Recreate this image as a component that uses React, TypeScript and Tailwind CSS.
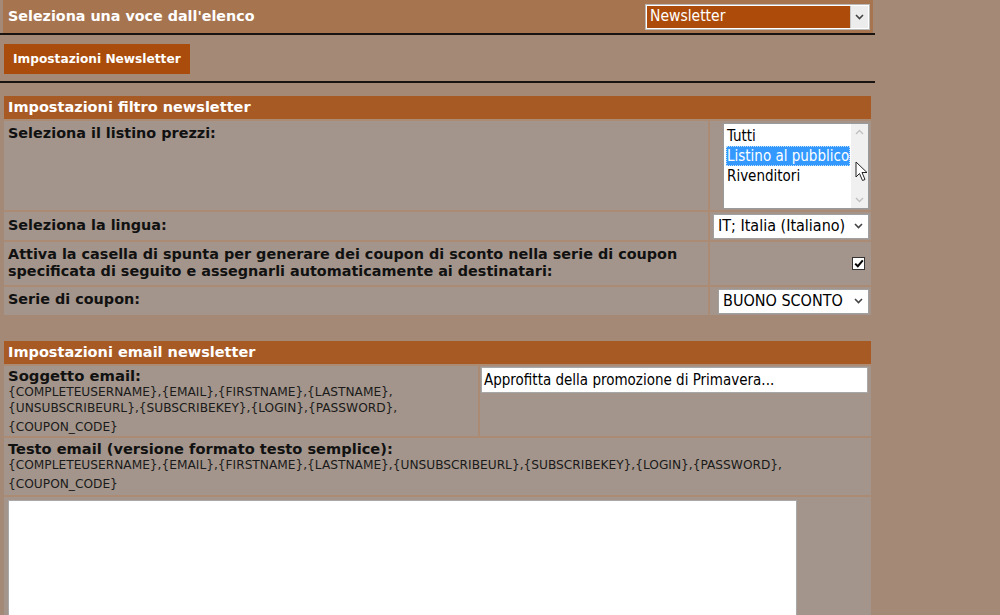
import React from "react";

const Chevron = ({ className = "" }: { className?: string }) => (
  <svg width="9" height="6" viewBox="0 0 9 6" className={className}>
    <path d="M1 1 L4.5 4.5 L8 1" fill="none" stroke="#444" strokeWidth="1.6" />
  </svg>
);

const FakeSelect = ({ text, width }: { text: string; width: string }) => (
  <div
    className={`${width} h-[25px] bg-white border border-[#a0a0a0] flex items-center justify-between pl-[4px] pr-[5px]`}
  >
    <span className="text-[16px] text-black leading-none whitespace-nowrap" style={{ fontFamily: "Tahoma, 'DejaVu Sans Condensed', 'DejaVu Sans', sans-serif" }}>
      {text}
    </span>
    <Chevron />
  </div>
);

export default function App() {
  const bold = { fontFamily: "Verdana, 'DejaVu Sans', sans-serif" };
  const ui = { fontFamily: "Tahoma, 'DejaVu Sans Condensed', 'DejaVu Sans', sans-serif" };
  return (
    <div className="w-[1000px] h-[615px] overflow-hidden bg-[#a48976]" style={bold}>
      <div className="w-[875px]">
        {/* top bar */}
        <div className="ml-[3px] mr-[2px] h-[33px] bg-[#a6744f] flex items-center justify-between pl-[5px] pr-[3px]">
          <span className="text-white font-bold text-[14.3px]">Seleziona una voce dall'elenco</span>
          <div className="w-[225px] h-[26px] border border-[#b9b9b9] bg-white p-[1px] flex">
            <div className="flex-1 bg-[#ad4c0a] flex items-center pl-[3px]">
              <span className="text-white text-[15.5px] leading-none" style={ui}>Newsletter</span>
            </div>
            <div className="w-[18px] bg-[#ececec] border-l border-[#c8c8c8] flex items-center justify-center">
              <Chevron />
            </div>
          </div>
        </div>
        <div className="h-[2px] bg-[#1a1410]" />
        {/* button area */}
        <div className="h-[46px] pl-[4px] pt-[9px]">
          <div className="w-[186px] h-[30px] bg-[#aa4d0c] flex items-center pl-[9px]">
            <span className="text-white font-bold text-[12.2px]">Impostazioni Newsletter</span>
          </div>
        </div>
        <div className="h-[2px] bg-[#1a1410]" />

        {/* section 1 */}
        <div className="mt-[13px] ml-[4px] mr-[4px] bg-[#ab8b74] flex flex-col gap-[2px]">
          <div className="h-[23px] bg-[#a85a25] flex items-center pl-[4px]">
            <span className="text-white font-bold text-[14.5px]">Impostazioni filtro newsletter</span>
          </div>
          <div className="grid grid-cols-[704px_1fr] gap-[2px]">
            <div className="bg-[#a3958b] h-[89px] pl-[4px] pt-[4px] text-[14.4px] font-bold text-[#111] leading-[16px]">
              Seleziona il listino prezzi:
            </div>
            <div className="bg-[#a3958b] h-[89px] flex justify-end pr-[2px] pt-[2px]">
              <div className="relative w-[146px] h-[86px] bg-white border border-[#9a9a9a] flex">
                <div className="flex-1 pt-[2px] pl-[2px] text-[15px] leading-[20px] text-black" style={ui}>
                  <div className="pl-[1px]">Tutti</div>
                  <div className="bg-[#3399ff] text-white pl-[1px] outline-1 outline-dotted outline-[#bfdfff] -outline-offset-1 w-[124px]">Listino al pubblico</div>
                  <div className="pl-[1px]">Rivenditori</div>
                </div>
                <div className="w-[17px] bg-[#f0f0f0] flex flex-col items-center justify-between py-[5px]">
                  <svg width="9" height="6" viewBox="0 0 9 6"><path d="M1 5 L4.5 1.5 L8 5" fill="none" stroke="#c0c0c0" strokeWidth="1.4" /></svg>
                  <svg width="9" height="6" viewBox="0 0 9 6"><path d="M1 1 L4.5 4.5 L8 1" fill="none" stroke="#c0c0c0" strokeWidth="1.4" /></svg>
                </div>
                {/* cursor */}
                <svg className="absolute left-[131px] top-[37px]" width="14" height="21" viewBox="0 0 14 21">
                  <path d="M1 1 L1 16 L4.5 12.5 L7.5 19.5 L10 18.5 L7 11.5 L12 11.5 Z" fill="white" stroke="#222" strokeWidth="1" strokeLinejoin="round" />
                </svg>
              </div>
            </div>
          </div>
          <div className="grid grid-cols-[704px_1fr] gap-[2px]">
            <div className="bg-[#a3958b] h-[28px] pl-[4px] pt-[5px] text-[14.4px] font-bold text-[#111] leading-[16px]">
              Seleziona la lingua:
            </div>
            <div className="bg-[#a3958b] h-[28px] flex justify-end items-center pr-[2px]">
              <FakeSelect text="IT; Italia (Italiano)" width="w-[156px]" />
            </div>
          </div>
          <div className="grid grid-cols-[704px_1fr] gap-[2px]">
            <div className="bg-[#a3958b] h-[43px] pl-[4px] pt-[4px] text-[14.4px] font-bold text-[#111] leading-[17px]">
              Attiva la casella di spunta per generare dei coupon di sconto nella serie di coupon specificata di seguito e assegnarli automaticamente ai destinatari:
            </div>
            <div className="bg-[#a3958b] h-[43px] flex justify-end pr-[6px] pt-[15px]">
              <div className="w-[13px] h-[13px] bg-white border border-[#333] flex items-center justify-center">
                <svg width="10" height="9" viewBox="0 0 10 9"><path d="M1.2 4.6 L3.8 7.2 L8.8 1.4" fill="none" stroke="#000" strokeWidth="2" /></svg>
              </div>
            </div>
          </div>
          <div className="grid grid-cols-[704px_1fr] gap-[2px]">
            <div className="bg-[#a3958b] h-[28px] pl-[4px] pt-[4px] text-[14.4px] font-bold text-[#111] leading-[16px]">
              Serie di coupon:
            </div>
            <div className="bg-[#a3958b] h-[28px] flex justify-end items-center pr-[2px]">
              <FakeSelect text="BUONO SCONTO" width="w-[151px]" />
            </div>
          </div>
        </div>

        {/* section 2 */}
        <div className="mt-[26px] ml-[4px] mr-[4px] bg-[#ab8b74] flex flex-col gap-[2px]">
          <div className="h-[23px] bg-[#a85a25] flex items-center pl-[4px]">
            <span className="text-white font-bold text-[14.5px]">Impostazioni email newsletter</span>
          </div>
          <div className="grid grid-cols-[474px_1fr] gap-[2px]">
            <div className="bg-[#a3958b] h-[70px] pl-[4px] pt-[2px] text-[#111]">
              <div className="text-[14.8px] font-bold leading-[16px]">Soggetto email:</div>
              <div className="text-[12.2px] leading-[16px] text-[#1a1a1a]">
                {"{COMPLETEUSERNAME},{EMAIL},{FIRSTNAME},{LASTNAME},"}
                <br />
                {"{UNSUBSCRIBEURL},{SUBSCRIBEKEY},{LOGIN},{PASSWORD},"}
              </div>
              <div className="text-[12.2px] leading-[16px] text-[#1a1a1a] mt-[3px]">{"{COUPON_CODE}"}</div>
            </div>
            <div className="bg-[#a3958b] h-[70px] pl-[1px] pt-[1px]">
              <div className="w-[387px] h-[26px] bg-white border border-[#a8a8a8] flex items-center pl-[2px]">
                <span className="text-[15px] text-black leading-none" style={ui}>Approfitta della promozione di Primavera...</span>
              </div>
            </div>
          </div>
          <div className="bg-[#a3958b] h-[57px] pl-[4px] pt-[3px] text-[#111]">
            <div className="text-[14.6px] font-bold leading-[16px]">Testo email (versione formato testo semplice):</div>
            <div className="text-[12.2px] leading-[16px] text-[#1a1a1a]">
              {"{COMPLETEUSERNAME},{EMAIL},{FIRSTNAME},{LASTNAME},{UNSUBSCRIBEURL},{SUBSCRIBEKEY},{LOGIN},{PASSWORD},"}
            </div>
            <div className="text-[12.2px] leading-[16px] text-[#1a1a1a] mt-[3px]">{"{COUPON_CODE}"}</div>
          </div>
          <div className="bg-[#a3958b] h-[140px] pt-[3px] pl-[4px]">
            <div className="w-[789px] h-[140px] bg-white border border-[#a8a8a8]" />
          </div>
        </div>
      </div>
    </div>
  );
}
